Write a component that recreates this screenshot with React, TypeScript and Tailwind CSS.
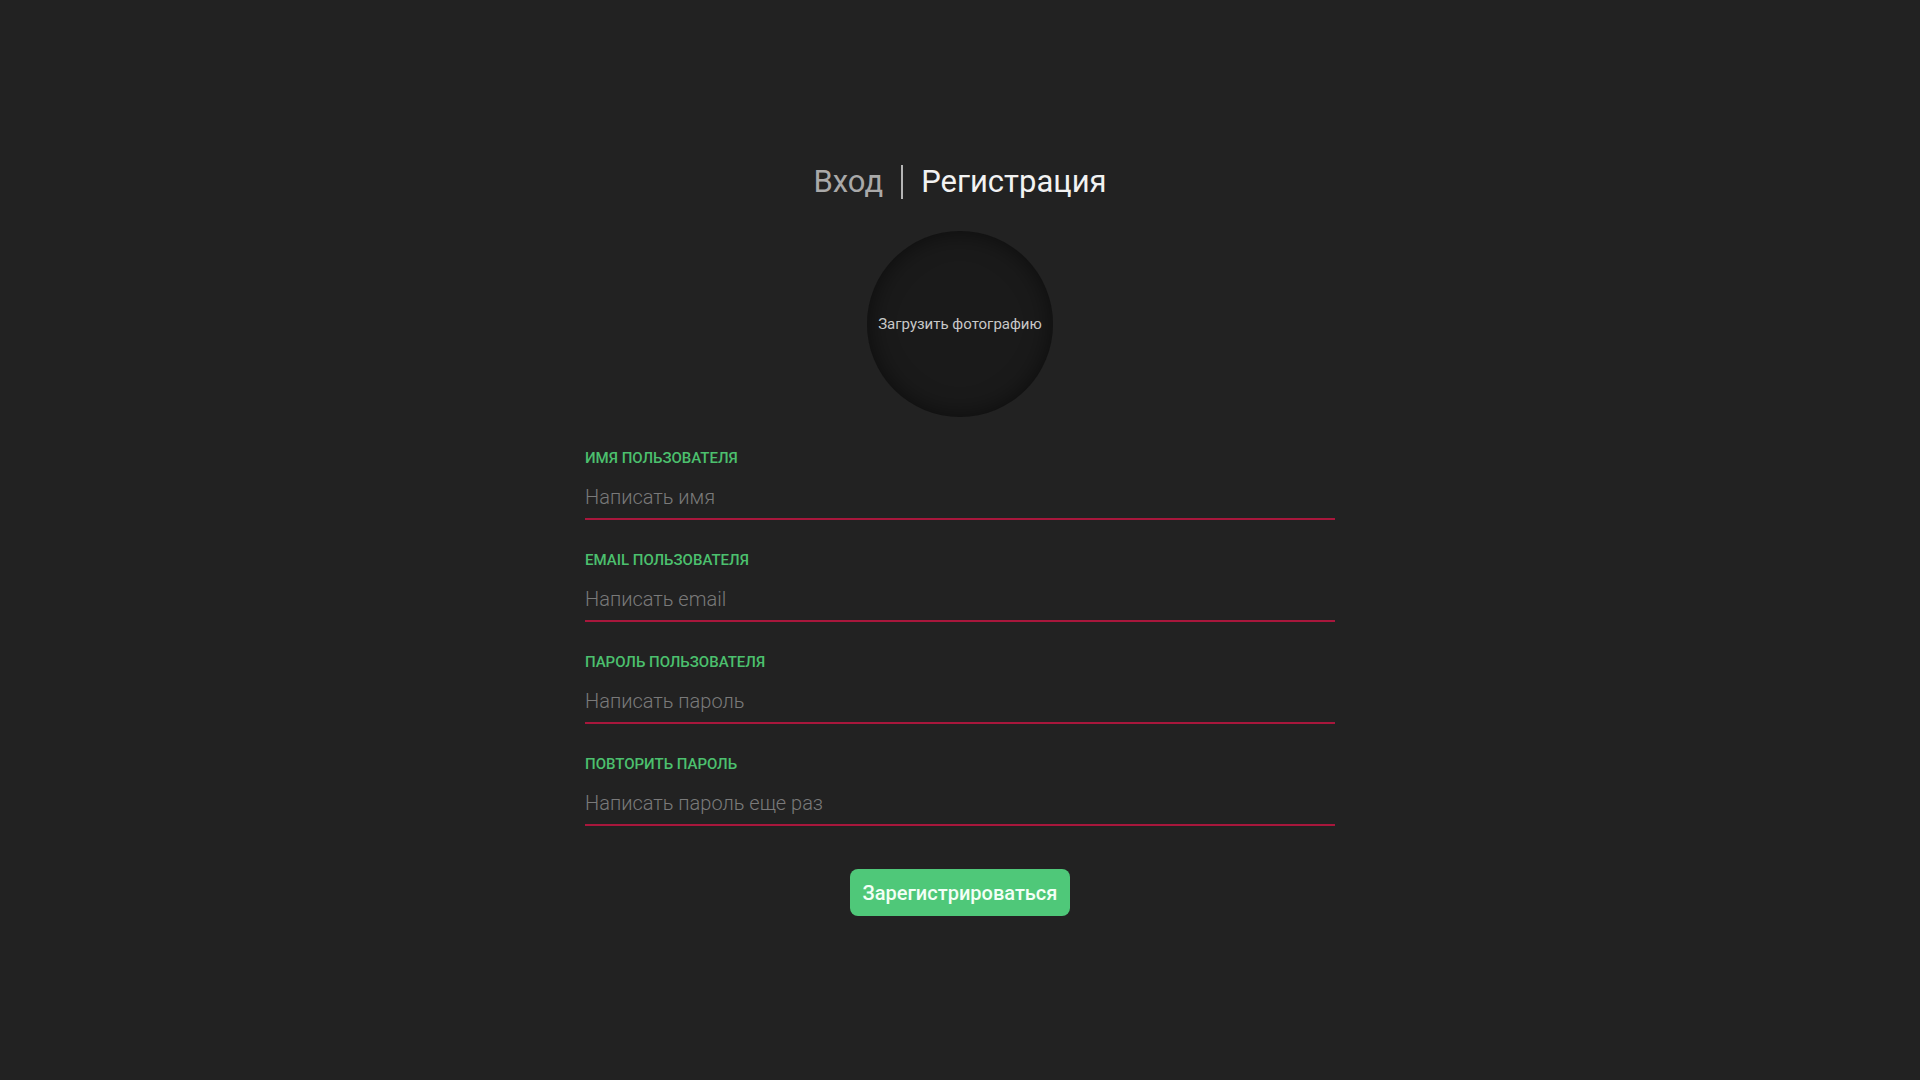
import { useState } from 'react';

const fields = [
  { id: 'name', label: 'Имя пользователя', placeholder: 'Написать имя', type: 'text' },
  { id: 'email', label: 'Email пользователя', placeholder: 'Написать email', type: 'email' },
  { id: 'password', label: 'Пароль пользователя', placeholder: 'Написать пароль', type: 'password' },
  { id: 'repeat', label: 'Повторить пароль', placeholder: 'Написать пароль еще раз', type: 'password' },
];

export default function App() {
  const [values, setValues] = useState<Record<string, string>>({});

  return (
    <main className="min-h-screen bg-[#222222] pt-[164px] font-['Roboto',sans-serif]">
      <div className="mx-auto flex w-[750px] flex-col items-center">
        {/* Tabs */}
        <div className="flex items-center text-[31px] leading-[36px]">
          <button className="text-[#a9a9a9]">Вход</button>
          <span className="mx-[18px] h-[34px] w-[2px] bg-[#b5b5b5]" />
          <button className="text-[#f2f2f2]">Регистрация</button>
        </div>

        {/* Avatar upload */}
        <label className="mt-[31px] flex h-[186px] w-[186px] cursor-pointer items-center justify-center rounded-full bg-[#1a1a1a] text-[15px] text-[#c8c8c8] shadow-[inset_0_0_24px_rgba(0,0,0,0.55)]">
          Загрузить фотографию
          <input type="file" className="hidden" />
        </label>

        {/* Form */}
        <form className="mt-[31px] flex w-full flex-col gap-[30px]" onSubmit={(e) => e.preventDefault()}>
          {fields.map((f) => (
            <div key={f.id} className="flex flex-col">
              <label htmlFor={f.id} className="text-[15px] font-medium uppercase leading-[20px] text-[#4cc06e]">
                {f.label}
              </label>
              <input
                id={f.id}
                type={f.type}
                placeholder={f.placeholder}
                value={values[f.id] ?? ''}
                onChange={(e) => setValues({ ...values, [f.id]: e.target.value })}
                className="mt-[15px] h-[37px] w-full border-b-2 border-[#a8173c] bg-transparent pb-[7px] text-[20px] font-light leading-[28px] text-[#dddddd] outline-none placeholder:text-[#7a7a7a]"
              />
            </div>
          ))}

          <button
            type="submit"
            className="mx-auto mt-[13px] h-[47px] w-[220px] rounded-lg bg-[#4fc879] text-[20px] font-medium text-[#f3fff6]"
          >
            Зарегистрироваться
          </button>
        </form>
      </div>
    </main>
  );
}
